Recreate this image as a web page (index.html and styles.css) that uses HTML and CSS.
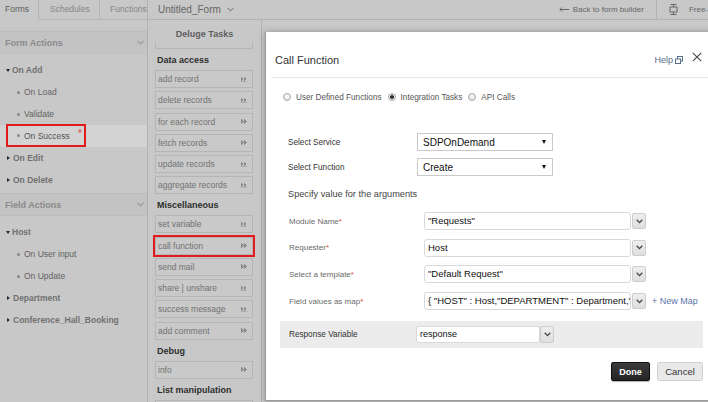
FILE: index.html
```html
<!DOCTYPE html>
<html>
<head>
<meta charset="utf-8">
<title>Call Function</title>
<link rel="stylesheet" href="styles.css">
</head>
<body>
<div class="app">
  <aside class="sidebar">
    <div class="tabs">
      <div class="tab active">Forms</div>
      <div class="tab">Schedules</div>
      <div class="tab">Functions</div>
    </div>
    <div class="sec-head">Form Actions<svg class="chev" width="7" height="5" viewBox="0 0 7 5"><path d="M0.5 0.8 L3.5 3.8 L6.5 0.8" fill="none" stroke="#9a9a9a" stroke-width="1.2"/></svg></div>
    <ul class="tree">
      <li class="grp open">On Add</li>
      <li class="sub">On Load</li>
      <li class="sub">Validate</li>
      <li class="current"><span class="mark">On Success<b class="star">*</b></span></li>
      <li class="grp">On Edit</li>
      <li class="grp">On Delete</li>
    </ul>
    <div class="sec-head">Field Actions<svg class="chev" width="7" height="5" viewBox="0 0 7 5"><path d="M0.5 0.8 L3.5 3.8 L6.5 0.8" fill="none" stroke="#9a9a9a" stroke-width="1.2"/></svg></div>
    <ul class="tree">
      <li class="grp open">Host</li>
      <li class="sub">On User input</li>
      <li class="sub">On Update</li>
      <li class="grp">Department</li>
      <li class="grp">Conference_Hall_Booking</li>
    </ul>
  </aside>
  <main class="main">
    <header class="topbar">
      <span class="form-title">Untitled_Form<svg width="7" height="5" viewBox="0 0 7 5"><path d="M0.5 0.8 L3.5 3.8 L6.5 0.8" fill="none" stroke="#888" stroke-width="1.1"/></svg></span>
      <span class="back"><svg width="10" height="5" viewBox="0 0 10 5"><path d="M10 2.5 H1 M3 0.5 L1 2.5 L3 4.5" fill="none" stroke="#666" stroke-width="1"/></svg>Back to form builder</span>
      <span class="sep"></span>
      <svg class="fit" width="9" height="11" viewBox="0 0 9 11"><path d="M1.5 0.5 H7.5 M4.5 0.5 V3 M4.5 8 V10.5 M1.5 10.5 H7.5" stroke="#666" stroke-width="1" fill="none"/><rect x="1" y="3" width="7" height="5" fill="none" stroke="#666" stroke-width="1"/></svg>
      <span class="free">Free-</span>
    </header>
    <div class="workspace">
      <section class="tasks">
        <div class="tasks-head">Deluge Tasks</div>
        <div class="tasks-list">
          <div class="peek"></div>
          <div class="cat">Data access</div>
          <div class="item">add record<i class="go"></i></div>
          <div class="item">delete records<i class="go"></i></div>
          <div class="item">for each record<i class="go"></i></div>
          <div class="item">fetch records<i class="go"></i></div>
          <div class="item">update records<i class="go"></i></div>
          <div class="item">aggregate records<i class="go"></i></div>
          <div class="cat">Miscellaneous</div>
          <div class="item">set variable<i class="go"></i></div>
          <div class="item call">call function<i class="go"></i></div>
          <div class="item">send mail<i class="go"></i></div>
          <div class="item">share | unshare<i class="go"></i></div>
          <div class="item">success message<i class="go"></i></div>
          <div class="item">add comment<i class="go"></i></div>
          <div class="cat">Debug</div>
          <div class="item">info<i class="go"></i></div>
          <div class="cat">List manipulation</div>
          <div class="item"></div>
        </div>
      </section>
    </div>
  </main>
</div>

<div class="dialog">
  <div class="dlg-head">
    <h1 class="dlg-title">Call Function</h1>
    <a class="help">Help<svg width="8" height="8" viewBox="0 0 8 8"><rect x="2.5" y="0.5" width="5" height="4.5" fill="none" stroke="#5b6e8c" stroke-width="1"/><rect x="0.5" y="3" width="5" height="4.5" fill="#fff" stroke="#5b6e8c" stroke-width="1"/></svg></a>
    <svg class="close" width="10" height="10" viewBox="0 0 10 10"><path d="M0.8 0.8 L9.2 9.2 M9.2 0.8 L0.8 9.2" stroke="#444" stroke-width="1.1"/></svg>
  </div>
  <div class="radios">
    <label class="opt"><i class="radio"></i>User Defined Functions</label>
    <label class="opt"><i class="radio on"></i>Integration Tasks</label>
    <label class="opt"><i class="radio"></i>API Calls</label>
  </div>
  <div class="svc-grid">
    <span class="lbl">Select Service</span>
    <div class="select">SDPOnDemand<i class="tri"></i></div>
    <span class="lbl">Select Function</span>
    <div class="select">Create<i class="tri"></i></div>
  </div>
  <p class="spec">Specify value for the arguments</p>
  <div class="arg-grid">
    <span class="arg-lbl">Module Name<b>*</b></span>
    <div class="inp">"Requests"</div>
    <span class="dd"><svg width="7" height="5" viewBox="0 0 7 5"><path d="M0.7 0.8 L3.5 3.6 L6.3 0.8" fill="none" stroke="#444" stroke-width="1.3"/></svg></span>
    <span></span>
    <span class="arg-lbl">Requester<b>*</b></span>
    <div class="inp">Host</div>
    <span class="dd"><svg width="7" height="5" viewBox="0 0 7 5"><path d="M0.7 0.8 L3.5 3.6 L6.3 0.8" fill="none" stroke="#444" stroke-width="1.3"/></svg></span>
    <span></span>
    <span class="arg-lbl">Select a template<b>*</b></span>
    <div class="inp">"Default Request"</div>
    <span class="dd"><svg width="7" height="5" viewBox="0 0 7 5"><path d="M0.7 0.8 L3.5 3.6 L6.3 0.8" fill="none" stroke="#444" stroke-width="1.3"/></svg></span>
    <span></span>
    <span class="arg-lbl">Field values as map<b>*</b></span>
    <div class="inp">{ "HOST" : Host,"DEPARTMENT" : Department,"F</div>
    <span class="dd"><svg width="7" height="5" viewBox="0 0 7 5"><path d="M0.7 0.8 L3.5 3.6 L6.3 0.8" fill="none" stroke="#444" stroke-width="1.3"/></svg></span>
    <a class="newmap">+ New Map</a>
  </div>
  <div class="resp">
    <span class="lbl">Response Variable</span>
    <div class="inp">response</div>
    <span class="dd"><svg width="7" height="5" viewBox="0 0 7 5"><path d="M0.7 0.8 L3.5 3.6 L6.3 0.8" fill="none" stroke="#444" stroke-width="1.3"/></svg></span>
  </div>
  <div class="actions">
    <button class="btn done">Done</button>
    <button class="btn cancel">Cancel</button>
  </div>
</div>
</body>
</html>
```

FILE: styles.css
```css
* { box-sizing: border-box; margin: 0; padding: 0; }

body {
  width: 708px;
  height: 402px;
  overflow: hidden;
  position: relative;
  background: #c8c8c8;
  font-family: "Liberation Sans", Arial, sans-serif;
  color: #333;
}

.app { display: flex; height: 402px; }

/* ---------- left sidebar ---------- */
.sidebar { width: 148px; flex: none; border-right: 1px solid #b2b2b2; }

.tabs { display: flex; height: 20px; }
.tab {
  height: 20px;
  line-height: 19px;
  font-size: 8.5px;
  color: #868686;
  padding: 0 10px 0 11px;
  border-left: 1px solid #b4b4b4;
  border-bottom: 1px solid #b4b4b4;
  white-space: nowrap;
}
.tab.active { width: 38px; padding-left: 5px; border: none; color: #5e5e5e; }
.tab:nth-child(2) { width: 61px; }
.tab:nth-child(3) { flex: 1; padding: 0 0 0 10px; }

.sec-head {
  margin-top: 11px;
  height: 23px;
  background: #c3c3c3;
  border-top: 1px solid #bdbdbd;
  border-bottom: 1px solid #bdbdbd;
  display: flex;
  align-items: center;
  justify-content: space-between;
  padding: 0 3px 0 5px;
  font-size: 9px;
  font-weight: bold;
  color: #8a8a8a;
}
.tree + .sec-head { margin-top: 2px; }

.tree { list-style: none; padding-top: 5px; }
.tree li {
  height: 22px;
  display: flex;
  align-items: center;
  font-size: 8.5px;
  white-space: nowrap;
}
.grp { font-weight: bold; color: #717171; padding-left: 6px; }
.grp::before {
  content: "";
  width: 0;
  height: 0;
  border-top: 2.5px solid transparent;
  border-bottom: 2.5px solid transparent;
  border-left: 3px solid #262637;
  margin: 0 3px 0 1px;
}
.grp.open::before {
  border-left: 2px solid transparent;
  border-right: 2px solid transparent;
  border-top: 3px solid #262637;
  border-bottom: 0;
  margin: 0 2px 0 0;
}
.sub { color: #626262; padding-left: 17px; }
.sub::before,
.mark::before {
  content: "";
  width: 3px;
  height: 3px;
  border-radius: 50%;
  background: #888;
  margin-right: 4px;
}
.tree li.current { background: #d3d3d3; padding-left: 6px; color: #555; }
.mark {
  display: flex;
  align-items: center;
  width: 80px;
  height: 23px;
  margin-top: -1px;
  border: 2px solid #e11b1b;
  padding-left: 9px;
}
.star {
  color: #e04545;
  font-size: 10px;
  font-weight: normal;
  margin-left: auto;
  margin-right: 2px;
  align-self: flex-start;
  margin-top: 2px;
}

/* ---------- main ---------- */
.main { flex: 1; display: flex; flex-direction: column; min-width: 0; }

.topbar {
  height: 20px;
  flex: none;
  border-bottom: 1px solid #b2b2b2;
  display: flex;
  align-items: center;
  padding-left: 10px;
  font-size: 8px;
  color: #666;
  white-space: nowrap;
}
.form-title { font-size: 10px; color: #666; display: flex; align-items: center; }
.form-title svg { margin-left: 6px; }
.back { margin-left: auto; display: flex; align-items: center; padding-right: 12px; }
.back svg { margin-right: 4px; }
.sep { width: 1px; height: 20px; background: #b2b2b2; }
.fit { margin: 0 11px 0 12px; }
.free { color: #666; }

.workspace { flex: 1; display: flex; min-height: 0; }

.tasks {
  width: 114px;
  flex: none;
  border-right: 1px solid #b2b2b2;
  display: flex;
  flex-direction: column;
  overflow: hidden;
}
.tasks-head {
  height: 22px;
  flex: none;
  padding-top: 8px;
  line-height: 12px;
  text-align: center;
  font-size: 9px;
  font-weight: bold;
  color: #5f5f5f;
}
.tasks-list { padding: 0 8px 0 7px; }
.peek { height: 7px; border: 1px solid #b4b4b4; border-top: none; }
.cat {
  height: 21px;
  padding: 5px 0 0 2px;
  line-height: 12px;
  font-size: 9px;
  font-weight: bold;
  color: #2e2e2e;
  white-space: nowrap;
}
.item {
  height: 18px;
  margin-top: 3.25px;
  border: 1px solid #b5b5b5;
  background: #c9c9c9;
  display: flex;
  align-items: center;
  justify-content: space-between;
  padding: 0 5px 0 2px;
  font-size: 8.5px;
  color: #727272;
  white-space: nowrap;
}
.cat + .item { margin-top: 0; }
.item.call { outline: 2px solid #e11b1b; }
.go {
  width: 6px;
  height: 5px;
  background:
    linear-gradient(to bottom right, transparent 50%, #c9c9c9 50%) 0 2.5px / 3px 2.5px no-repeat,
    linear-gradient(to top right, transparent 50%, #c9c9c9 50%) 0 0 / 3px 2.5px no-repeat,
    linear-gradient(to bottom right, transparent 50%, #c9c9c9 50%) 3px 2.5px / 3px 2.5px no-repeat,
    linear-gradient(to top right, transparent 50%, #c9c9c9 50%) 3px 0 / 3px 2.5px no-repeat,
    #8c8c8c;
}

/* ---------- dialog ---------- */
.dialog {
  position: absolute;
  left: 265px;
  top: 32px;
  width: 452px;
  height: 369px;
  background: #fff;
  border-left: 1px solid #9a9a9a;
  border-bottom: 1px solid #9a9a9a;
  box-shadow: 0 0 6px rgba(0, 0, 0, 0.3);
}
.dlg-head {
  height: 46px;
  margin-left: 5px;
  padding: 21px 15px 0 4px;
  border-bottom: 1px solid #e8e8e8;
  display: flex;
  align-items: flex-start;
}
.dlg-title { font-size: 11px; font-weight: normal; line-height: 14px; color: #333; }
.help {
  margin-left: auto;
  font-size: 9px;
  line-height: 14px;
  color: #5b6e8c;
  display: flex;
  align-items: center;
}
.help svg { margin-left: 2px; }
.close { margin: -1px 0 0 9px; }

.radios {
  margin-top: 12px;
  padding-left: 17px;
  display: flex;
  align-items: center;
  gap: 6px;
  height: 14px;
  font-size: 8.2px;
  color: #555;
}
.opt { display: flex; align-items: center; white-space: nowrap; }
.radio {
  width: 8px;
  height: 8px;
  border-radius: 50%;
  border: 1px solid #a8a8a8;
  background: radial-gradient(circle at 50% 35%, #fafafa, #dcdcdc);
  margin-right: 5px;
}
.radio.on { background: radial-gradient(circle, #333 0 1.6px, #e6e6e6 2.2px); }

.svc-grid {
  margin-top: 29px;
  padding-left: 22px;
  display: grid;
  grid-template-columns: 129px 136px;
  grid-auto-rows: 18px;
  row-gap: 7px;
  align-items: center;
}
.lbl { font-size: 8.2px; color: #333; white-space: nowrap; }
.select {
  height: 18px;
  border: 1px solid #c9c9c9;
  background: #fff;
  display: flex;
  align-items: center;
  justify-content: space-between;
  padding: 0 6px 0 5px;
  font-size: 10px;
  color: #111;
}
.tri {
  width: 0;
  height: 0;
  border-left: 2.5px solid transparent;
  border-right: 2.5px solid transparent;
  border-top: 4px solid #111;
}

.spec { margin-top: 11px; padding-left: 22px; font-size: 9.2px; line-height: 14px; color: #444; }

.arg-grid {
  margin-top: 11px;
  padding-left: 23px;
  display: grid;
  grid-template-columns: 135px 207px 15px auto;
  grid-auto-rows: 18px;
  row-gap: 8.7px;
  align-items: center;
}
.arg-lbl { font-size: 8px; color: #6a6a6a; white-space: nowrap; }
.arg-lbl b { color: #e04545; font-weight: normal; }
.inp {
  height: 18px;
  border: 1px solid #d9d9d9;
  border-radius: 3px;
  background: #fff;
  padding: 0 3px;
  font-size: 9.5px;
  line-height: 16px;
  color: #111;
  white-space: nowrap;
  overflow: hidden;
}
.dd {
  justify-self: end;
  width: 14px;
  height: 16px;
  border: 1px solid #cdcdcd;
  border-radius: 2px;
  background: linear-gradient(#eee, #dedede);
  display: flex;
  align-items: center;
  justify-content: center;
}
.newmap { margin-left: 6px; font-size: 9px; color: #5b74a8; white-space: nowrap; }

.resp {
  margin: 11px 14px 0;
  height: 27px;
  background: #ececec;
  padding-left: 9px;
  display: grid;
  grid-template-columns: 127px 124px 14px;
  align-items: center;
}
.resp .inp { height: 17px; border-radius: 2px; font-size: 9px; line-height: 15px; }
.resp .dd { height: 17px; }

.actions {
  margin-top: 14px;
  padding-right: 14px;
  display: flex;
  justify-content: flex-end;
  gap: 7px;
}
.btn {
  height: 19px;
  border-radius: 2px;
  font-family: inherit;
  font-size: 9.5px;
}
.done {
  width: 39px;
  background: linear-gradient(#3c3c3c, #242424);
  border: 1px solid #111;
  color: #fff;
  font-weight: bold;
  font-size: 9px;
  box-shadow: 0 1px 1px rgba(0, 0, 0, 0.3);
}
.cancel {
  width: 46px;
  background: #e9e9e9;
  border: 1px solid #d0d0d0;
  color: #333;
}
```
